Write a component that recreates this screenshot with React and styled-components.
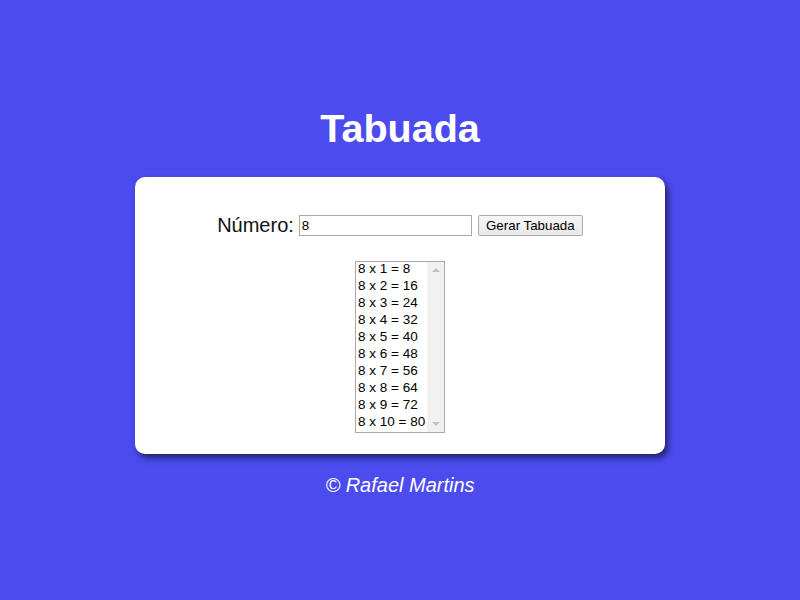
import React, { useState } from 'react';
import styled, { createGlobalStyle } from 'styled-components';

const GlobalStyle = createGlobalStyle`
    html, body {
        margin: 0;
        padding: 0;
        background: #4b4bee;
        font-family: "Liberation Sans", Arial, sans-serif;
    }
`;

function App() {
    const [numero, setNumero] = useState('8');
    const [tabuada, setTabuada] = useState(8);

    const gerar = () => {
        const n = parseInt(numero, 10);
        if (!isNaN(n)) setTabuada(n);
    }

    const linhas = [];
    for (let i = 1; i <= 10; i++) {
        linhas.push(`${tabuada} x ${i} = ${tabuada * i}`);
    }

    return (
        <Page>
            <GlobalStyle />
            <Title>Tabuada</Title>
            <Card>
                <FormRow>
                    <Label htmlFor="numero">Número:</Label>
                    <Textbox
                        id="numero"
                        type="text"
                        value={numero}
                        onChange={(e) => setNumero(e.target.value)} />
                    <Button type="button" onClick={gerar}>Gerar Tabuada</Button>
                </FormRow>
                <ListBox role="listbox">
                    <Options>
                        {linhas.map((l) => <Option key={l} role="option">{l}</Option>)}
                    </Options>
                    <Scrollbar>
                        <Arrow />
                        <Arrow down />
                    </Scrollbar>
                </ListBox>
            </Card>
            <Footer>© Rafael Martins</Footer>
        </Page>
    )
}

const Page = styled.main`
    display: flex;
    flex-direction: column;
    align-items: center;
    padding-top: 106px;
    min-height: 600px;
    box-sizing: border-box;
`;

const Title = styled.h1`
    margin: 0 0 27px;
    font-size: 39.5px;
    line-height: 44px;
    font-weight: bold;
    color: #ffffff;
`;

const Card = styled.section`
    width: 530px;
    box-sizing: border-box;
    background: #ffffff;
    border-radius: 10px;
    box-shadow: 3px 4px 6px rgba(0, 0, 0, 0.55);
    padding: 37px 20px 21px;
    display: flex;
    flex-direction: column;
    align-items: center;
    gap: 24px;
`;

const FormRow = styled.div`
    display: flex;
    align-items: center;
    height: 23px;
`;

const Label = styled.label`
    font-size: 20px;
    line-height: 23px;
    color: #111;
    margin-right: 5px;
`;

const Textbox = styled.input`
    width: 173px;
    height: 21px;
    box-sizing: border-box;
    border: 1px solid #a9a9a9;
    padding: 1px 2px;
    font-family: "Liberation Sans", Arial, sans-serif;
    font-size: 13.33px;
    color: #000;
    outline: none;
`;

const Button = styled.button`
    margin-left: 6px;
    width: 105px;
    height: 21px;
    box-sizing: border-box;
    border: 1px solid #a9a9a9;
    border-radius: 2px;
    background: linear-gradient(#f6f6f6, #e9e9e9);
    font-family: "Liberation Sans", Arial, sans-serif;
    font-size: 13.33px;
    color: #000;
    padding: 0;
`;

const ListBox = styled.div`
    width: 90px;
    height: 172px;
    box-sizing: border-box;
    border: 1px solid #a9a9a9;
    display: flex;
    background: #ffffff;
    overflow: hidden;
`;

const Options = styled.div`
    flex: 1;
    margin-top: -2px;
    padding-left: 2px;
`;

const Option = styled.div`
    font-size: 13.5px;
    line-height: 17px;
    color: #000;
    white-space: nowrap;
`;

const Scrollbar = styled.div`
    width: 17px;
    background: #f1f1f1;
    display: flex;
    flex-direction: column;
    justify-content: space-between;
    align-items: center;
    padding: 6px 0;
    box-sizing: border-box;
`;

const Arrow = styled.span`
    width: 0;
    height: 0;
    border-left: 4px solid transparent;
    border-right: 4px solid transparent;
    ${(p) => p.down
        ? 'border-top: 4px solid #c1c1c1;'
        : 'border-bottom: 4px solid #c1c1c1;'}
`;

const Footer = styled.footer`
    margin-top: 20px;
    font-size: 20px;
    line-height: 23px;
    font-style: italic;
    color: #ffffff;
`;

export default App;
